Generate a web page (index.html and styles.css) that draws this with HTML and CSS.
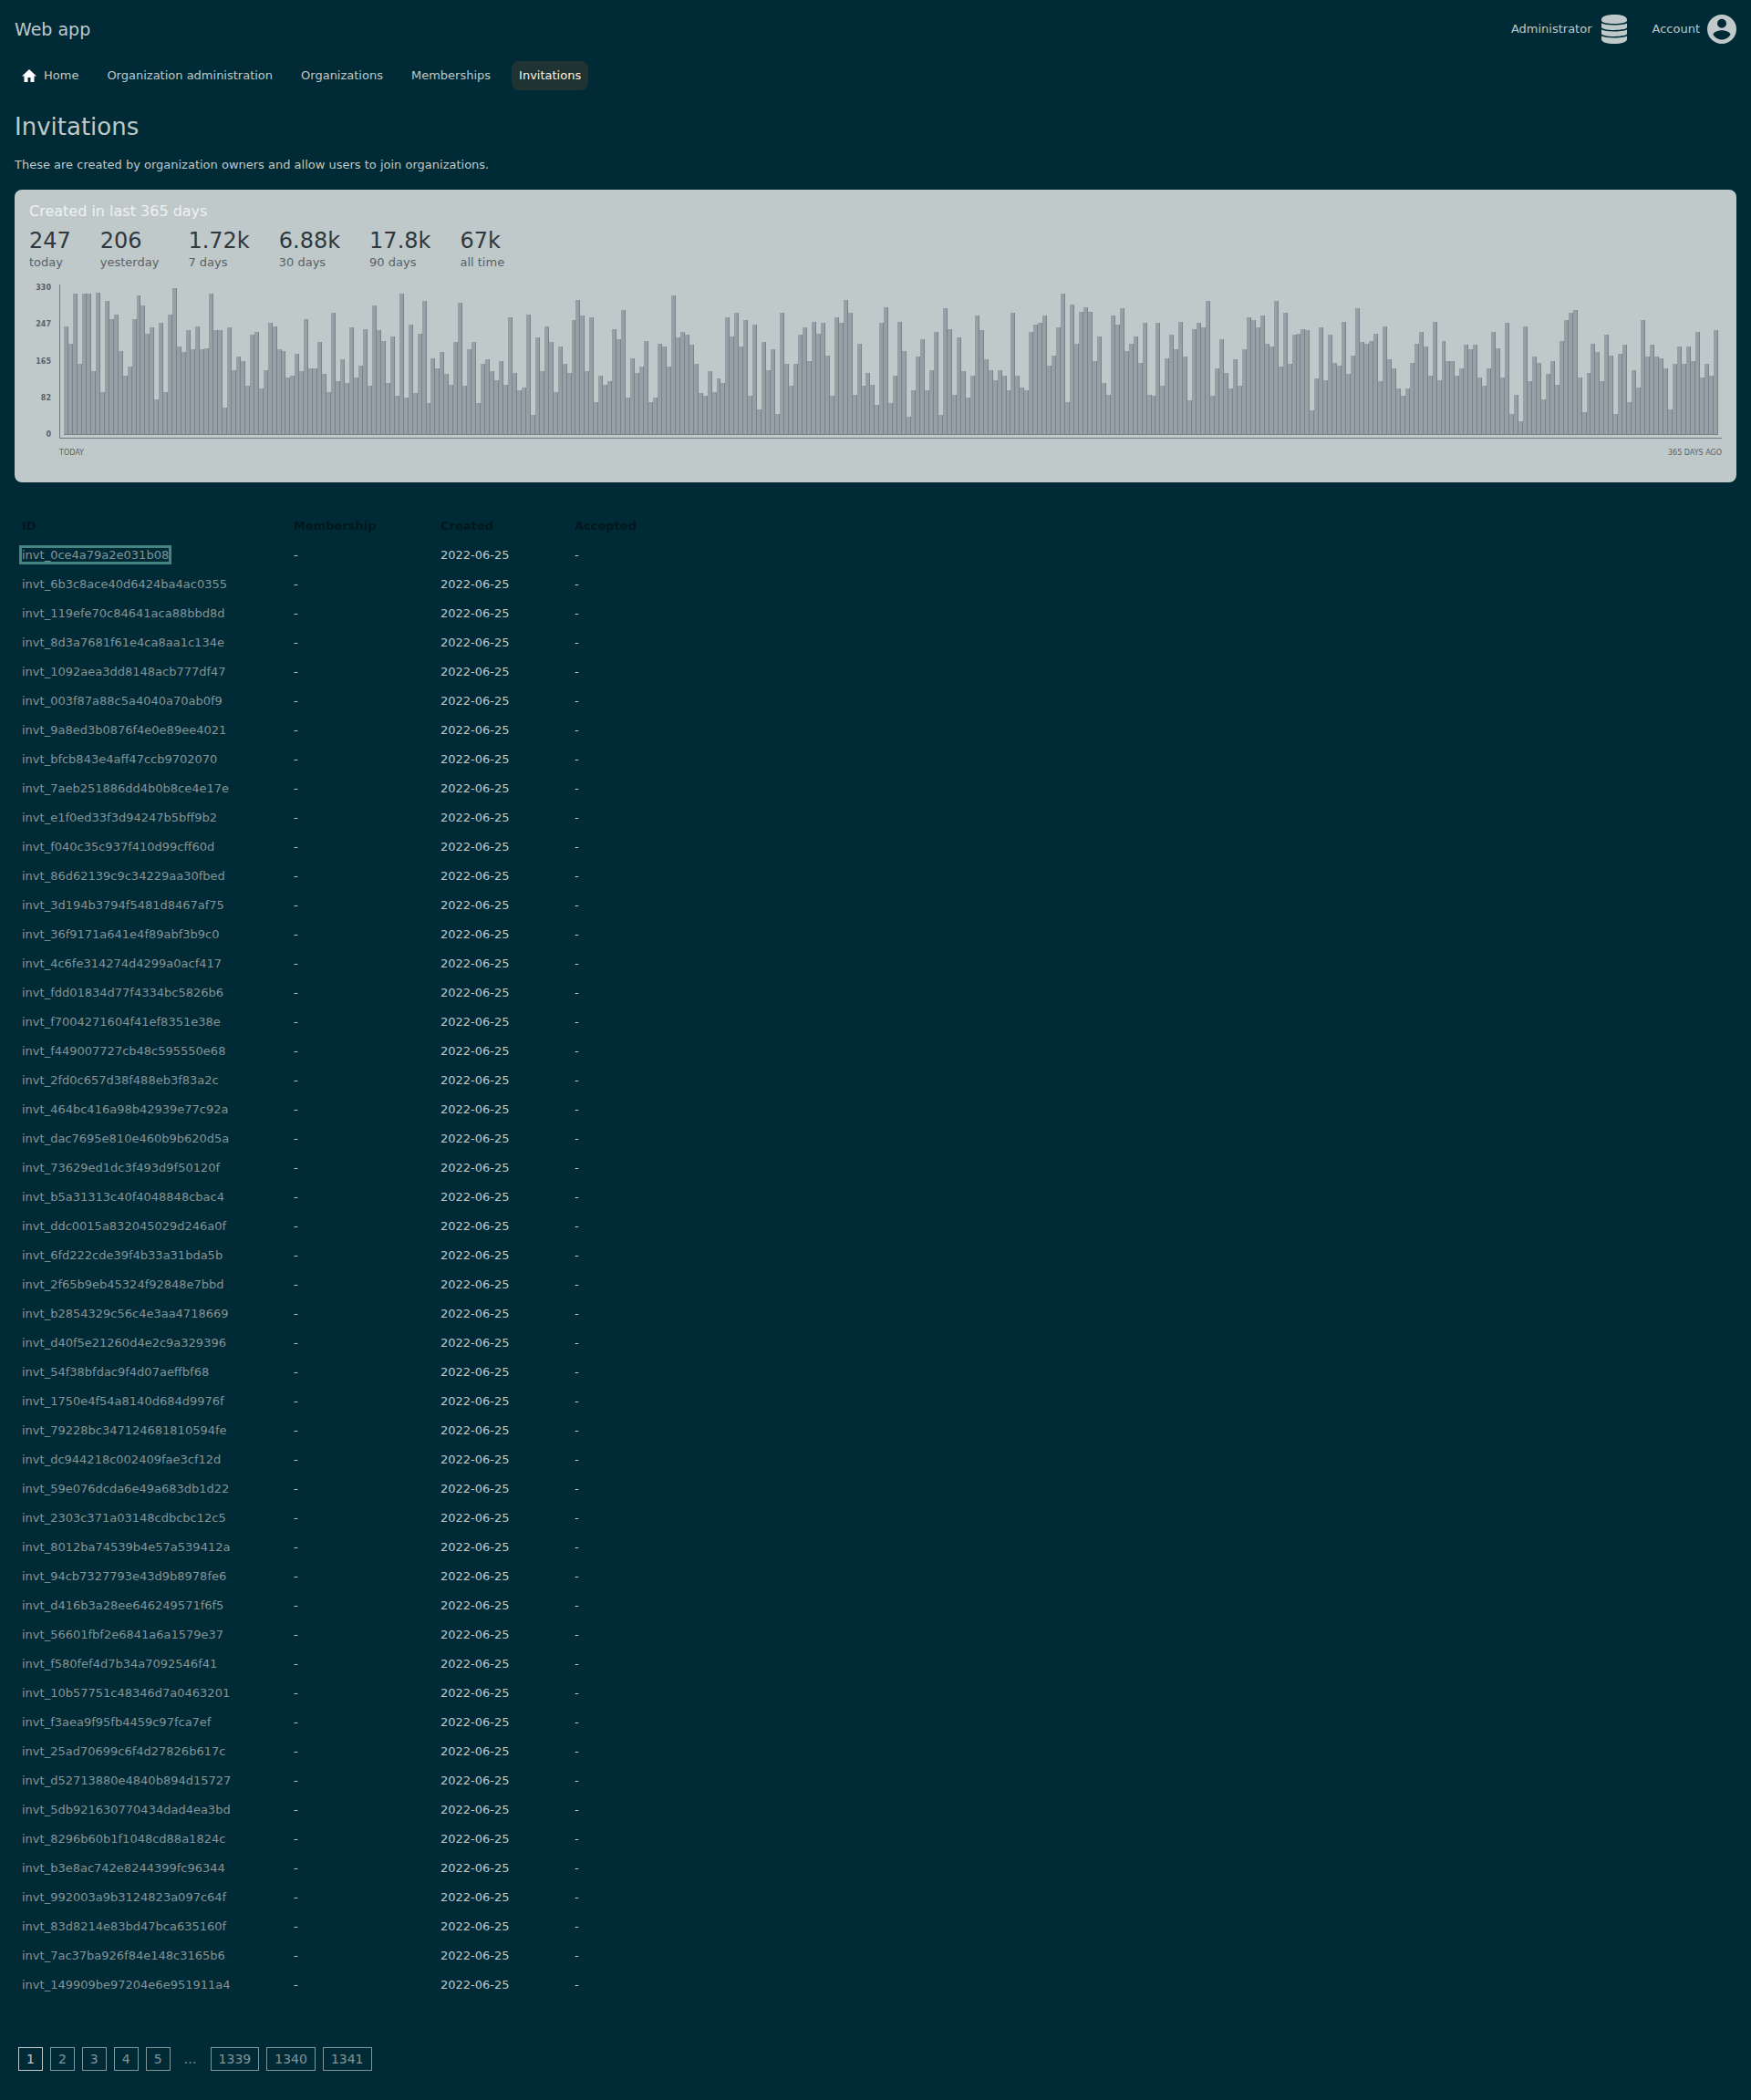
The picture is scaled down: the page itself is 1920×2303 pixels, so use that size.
FILE: index.html
```html
<!DOCTYPE html>
<html lang="en">
<head>
<meta charset="utf-8">
<title>Invitations</title>
<link rel="stylesheet" href="styles.css">
</head>
<body>
<header class="topbar">
  <a class="brand" href="#">Web app</a>
  <nav class="user-menu" aria-label="User">
    <a class="user-link" href="#">Administrator
      <svg class="user-icon" viewBox="0 0 32 32" aria-hidden="true"><path d="M2 5.500C2 2.200 7.500 0 16 0s14 2.200 14 5.500v1C30 8.500 24.500 10 16 10S2 8.500 2 6.500zM2 9.500c2.500 1.300 7.500 2 14 2s11.500-.7 14-2V14c0 1.500-5.500 3-14 3S2 15.500 2 14zM2 16.500c2.500 1.300 7.500 2 14 2s11.500-.7 14-2V21c0 1.500-5.500 3-14 3S2 22.500 2 21zM2 23.500c2.500 1.300 7.500 2 14 2s11.500-.7 14-2V27c0 3-5.500 5-14 5S2 30 2 27z"/></svg>
    </a>
    <a class="user-link" href="#">Account
      <svg class="user-icon" viewBox="0 0 32 32" aria-hidden="true"><path fill-rule="evenodd" d="M16 0a16 16 0 1 1 0 32 16 16 0 0 1 0-32zm0 4.800a5 5 0 1 0 0 10 5 5 0 0 0 0-10zm0 12.500c-4.500 0-9.500 2.200-9.500 4.700 1.700 3 5.500 5.500 9.500 5.500s7.800-2.500 9.500-5.500c0-2.500-5-4.700-9.500-4.700z"/></svg>
    </a>
  </nav>
</header>
<nav class="tabs" aria-label="Main">
  <a class="tab" href="#"><svg class="home-icon" viewBox="0 0 16 16" aria-hidden="true"><path d="M8 1 0 8.500h2.500V15h4v-5h3v5h4V8.500H16z"/></svg>Home</a>
  <a class="tab" href="#">Organization administration</a>
  <a class="tab" href="#">Organizations</a>
  <a class="tab" href="#">Memberships</a>
  <a class="tab tab-current" href="#" aria-current="page">Invitations</a>
</nav>
<main class="content">
  <h1 class="title">Invitations</h1>
  <p class="intro">These are created by organization owners and allow users to join organizations.</p>
  <section class="card">
    <h2 class="card-title">Created in last 365 days</h2>
    <ul class="stats">
      <li><strong>247</strong><span>today</span></li>
      <li><strong>206</strong><span>yesterday</span></li>
      <li><strong>1.72k</strong><span>7 days</span></li>
      <li><strong>6.88k</strong><span>30 days</span></li>
      <li><strong>17.8k</strong><span>90 days</span></li>
      <li><strong>67k</strong><span>all time</span></li>
    </ul>
    <div class="chart">
      <div class="y-axis"><span>330</span><span>247</span><span>165</span><span>82</span><span>0</span></div>
      <div class="plot" id="plot"></div>
      <div class="x-axis"><span>TODAY</span><span>365 DAYS AGO</span></div>
    </div>
  </section>
  <table class="invitations">
    <thead><tr><th class="col-id">ID</th><th class="col-membership">Membership</th><th class="col-created">Created</th><th>Accepted</th></tr></thead>
    <tbody id="rows"></tbody>
  </table>
  <nav class="pages" aria-label="Pages">
    <a class="page page-current" href="#" aria-current="page">1</a>
    <a class="page" href="#">2</a>
    <a class="page" href="#">3</a>
    <a class="page" href="#">4</a>
    <a class="page" href="#">5</a>
    <span class="ellipsis">…</span>
    <a class="page" href="#">1339</a>
    <a class="page" href="#">1340</a>
    <a class="page" href="#">1341</a>
  </nav>
</main>
<script src="script.js"></script>
</body>
</html>
```
FILE: styles.css
```css
* { box-sizing: border-box; }
body {
  margin: 0;
  background: #002b36;
  color: #bfc9ca;
  font: 13px/20px "DejaVu Sans", sans-serif;
}
a { color: inherit; text-decoration: none; }
.topbar {
  display: flex;
  justify-content: space-between;
  align-items: center;
  height: 63px;
  padding: 0 16px;
}
.brand { font-size: 19px; }
.user-menu { display: flex; gap: 26px; }
.user-link { display: flex; align-items: center; gap: 8px; }
.user-icon { width: 32px; height: 32px; fill: currentColor; }
.tabs { display: flex; gap: 15px; padding: 4px 16px 0; }
.tab {
  display: flex;
  align-items: center;
  gap: 8px;
  height: 32px;
  padding: 0 8px;
  border-radius: 8px;
}
.tab-current { background: #1f3333; color: #fdf6e3; }
.home-icon { width: 16px; height: 16px; fill: #fff; }
.content { padding: 0 16px 32px; }
.title { margin: 24px 0 0; font-size: 26px; font-weight: 400; line-height: 32px; }
.intro { margin: 16px 0 0; }
.card {
  margin-top: 17px;
  padding: 16px 16px 26px;
  border-radius: 8px;
  background: #bfc9ca;
  color: #586266;
}
.card-title { margin: 0; color: #eef2f2; font-size: 16px; font-weight: 400; line-height: 16px; }
.stats { display: flex; gap: 32px; margin: 8px 0 0; padding: 0; list-style: none; }
.stats li { display: flex; flex-direction: column; }
.stats strong { color: #2f383d; font-size: 24px; font-weight: 400; line-height: 32px; }
.stats span { line-height: 16px; }
.chart {
  display: grid;
  grid-template-columns: 24px 1fr;
  column-gap: 9px;
  margin-top: 16px;
}
.y-axis {
  display: flex;
  flex-direction: column;
  justify-content: space-between;
  height: 169px;
  font-size: 8px;
  font-weight: 700;
  line-height: 8px;
  text-align: right;
}
.plot {
  display: flex;
  align-items: flex-end;
  height: 169px;
  padding: 4px 3px 3px 4px;
  border-left: 1px solid #6b7a83;
  border-bottom: 1px solid #6b7a83;
}
.bar { flex: 1 1 0; background: #959fa6; box-shadow: inset -1px -1px #78848a; }
.x-axis {
  display: flex;
  grid-column: 2;
  justify-content: space-between;
  padding-top: 10px;
  font-size: 8px;
  line-height: 12px;
}
.invitations { margin-top: 32px; border-collapse: collapse; }
.invitations th, .invitations td { height: 32px; padding: 0 8px; text-align: left; }
.invitations th { color: #00171d; }
.col-id { width: 298px; }
.col-membership { width: 161px; }
.col-created { width: 147px; }
.invite { color: #839496; }
.invite-focused { outline: 3px solid #468482; }
.pages { display: flex; align-items: center; gap: 8px; margin-top: 52px; padding-left: 4px; }
.page {
  padding: 0 8px;
  border: 1px solid #839496;
  color: #839496;
  font-size: 14px;
  line-height: 24px;
}
.page-current { border-color: #bfc9ca; color: #bfc9ca; }
.ellipsis { padding: 0 7px; color: #839496; font-size: 14px; }
```
FILE: script.js
```js
// Relative height of each day's bar, newest first.
const levels = [
  119,100,155,78,155,155,70,156,47,147,127,132,92,65,75,127,153,142,111,118,
  39,123,47,132,161,97,91,115,94,119,94,95,155,115,115,30,118,71,86,81,
  54,110,113,51,71,123,119,94,92,63,65,89,70,127,73,73,102,67,47,134,
  59,83,57,118,63,76,116,54,142,115,103,57,108,43,155,41,121,46,111,147,
  35,84,73,91,67,55,102,145,54,94,102,35,78,83,70,60,81,55,129,68,
  49,52,132,22,107,70,119,102,47,97,78,68,126,148,131,70,129,36,65,55,
  59,116,105,137,41,84,68,75,103,36,41,100,97,75,153,107,113,110,99,78,
  46,43,70,47,62,57,129,108,134,97,126,43,121,28,102,71,94,23,134,78,
  54,78,110,118,81,124,111,123,87,43,129,123,148,134,44,100,54,68,55,33,
  123,140,35,65,124,92,20,49,86,105,49,71,113,22,139,116,44,107,70,41,
  65,131,115,83,71,60,71,65,49,134,65,52,49,113,121,123,131,76,87,118,
  155,36,143,100,135,140,135,81,108,57,44,131,121,139,92,100,108,79,123,44,
  43,123,54,84,110,94,124,86,38,116,123,118,147,43,73,105,68,51,83,54,
  94,129,126,118,131,100,97,147,75,134,78,110,111,116,115,27,62,118,60,110,
  79,76,124,67,87,139,102,100,103,111,59,119,83,73,51,43,51,79,100,113,
  97,65,124,60,103,81,81,65,73,99,94,99,63,54,73,113,95,63,123,23,
  44,15,119,59,86,79,39,67,81,55,103,126,134,137,63,25,68,100,91,59,
  110,87,23,89,99,36,71,52,126,86,99,86,84,73,28,78,97,78,97,81,
  113,63,78,65,115
];
const SCALE_TOP = 161;

const invitations = [
  "invt_0ce4a79a2e031b08", "invt_6b3c8ace40d6424ba4ac0355", "invt_119efe70c84641aca88bbd8d",
  "invt_8d3a7681f61e4ca8aa1c134e", "invt_1092aea3dd8148acb777df47", "invt_003f87a88c5a4040a70ab0f9",
  "invt_9a8ed3b0876f4e0e89ee4021", "invt_bfcb843e4aff47ccb9702070", "invt_7aeb251886dd4b0b8ce4e17e",
  "invt_e1f0ed33f3d94247b5bff9b2", "invt_f040c35c937f410d99cff60d", "invt_86d62139c9c34229aa30fbed",
  "invt_3d194b3794f5481d8467af75", "invt_36f9171a641e4f89abf3b9c0", "invt_4c6fe314274d4299a0acf417",
  "invt_fdd01834d77f4334bc5826b6", "invt_f7004271604f41ef8351e38e", "invt_f449007727cb48c595550e68",
  "invt_2fd0c657d38f488eb3f83a2c", "invt_464bc416a98b42939e77c92a", "invt_dac7695e810e460b9b620d5a",
  "invt_73629ed1dc3f493d9f50120f", "invt_b5a31313c40f4048848cbac4", "invt_ddc0015a832045029d246a0f",
  "invt_6fd222cde39f4b33a31bda5b", "invt_2f65b9eb45324f92848e7bbd", "invt_b2854329c56c4e3aa4718669",
  "invt_d40f5e21260d4e2c9a329396", "invt_54f38bfdac9f4d07aeffbf68", "invt_1750e4f54a8140d684d9976f",
  "invt_79228bc347124681810594fe", "invt_dc944218c002409fae3cf12d", "invt_59e076dcda6e49a683db1d22",
  "invt_2303c371a03148cdbcbc12c5", "invt_8012ba74539b4e57a539412a", "invt_94cb7327793e43d9b8978fe6",
  "invt_d416b3a28ee646249571f6f5", "invt_56601fbf2e6841a6a1579e37", "invt_f580fef4d7b34a7092546f41",
  "invt_10b57751c48346d7a0463201", "invt_f3aea9f95fb4459c97fca7ef", "invt_25ad70699c6f4d27826b617c",
  "invt_d52713880e4840b894d15727", "invt_5db921630770434dad4ea3bd", "invt_8296b60b1f1048cd88a1824c",
  "invt_b3e8ac742e8244399fc96344", "invt_992003a9b3124823a097c64f", "invt_83d8214e83bd47bca635160f",
  "invt_7ac37ba926f84e148c3165b6", "invt_149909be97204e6e951911a4"
];

document.getElementById("plot").innerHTML = levels
  .map(level => `<div class="bar" style="height:${level / SCALE_TOP * 100}%"></div>`)
  .join("");

document.getElementById("rows").innerHTML = invitations
  .map((id, i) => `<tr><td><a class="invite${i ? "" : " invite-focused"}" href="#">${id}</a></td><td>-</td><td>2022-06-25</td><td>-</td></tr>`)
  .join("");
```
